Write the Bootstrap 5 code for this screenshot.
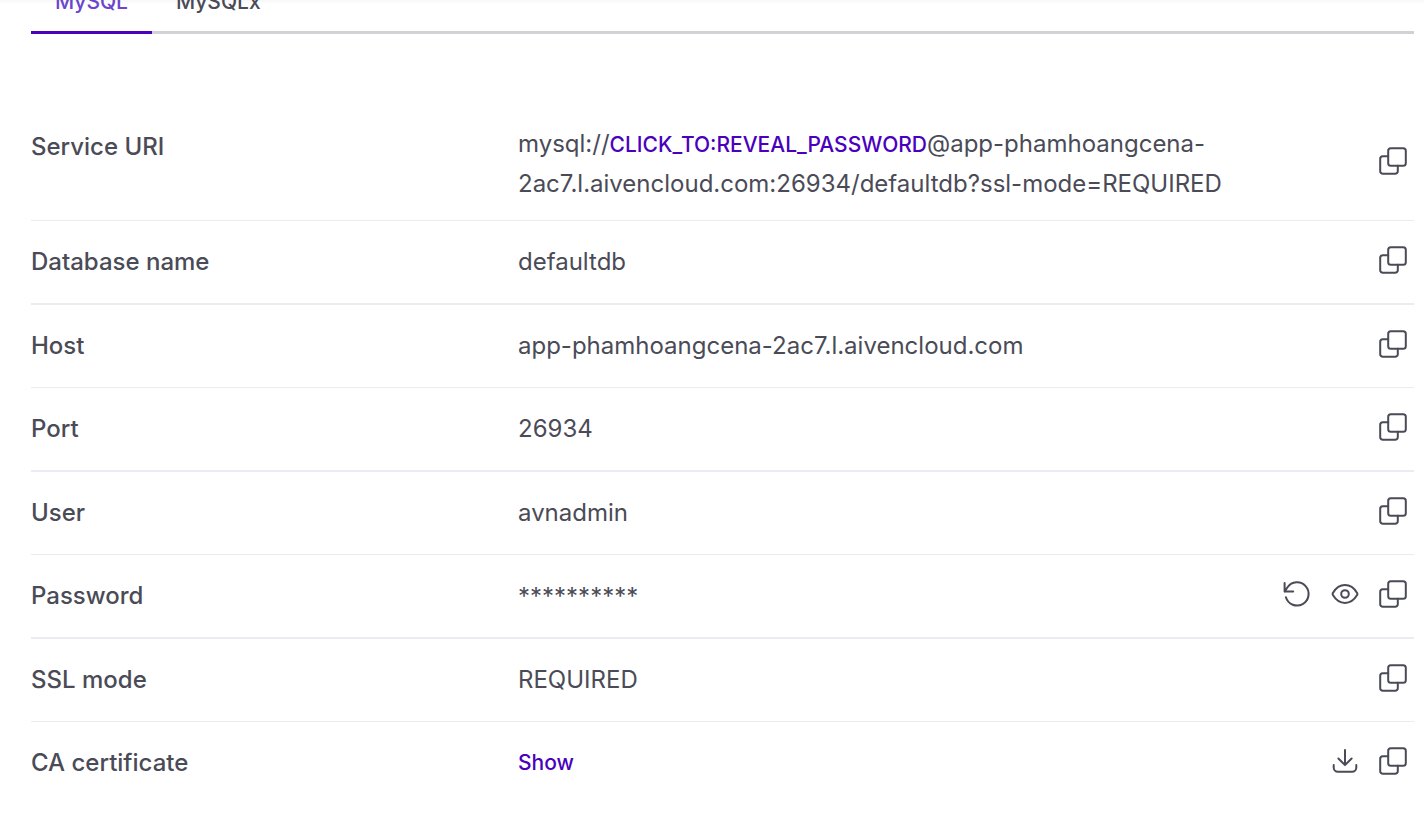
<!DOCTYPE html>
<html lang="en">
<head>
<meta charset="utf-8">
<meta name="viewport" content="width=device-width, initial-scale=1">
<title>Connection information</title>
<link href="https://cdn.jsdelivr.net/npm/bootstrap@5.3.0/dist/css/bootstrap.min.css" rel="stylesheet">
<style>
  body { font-family: Inter, "Liberation Sans", sans-serif; font-size: 24px; line-height: 36px; color: #4a4b57; background: #fff; overflow: hidden; }
  .conn { padding: 0 10px 0 31px; }
  .tabs { height: 34px; border-bottom: 3px solid #d2d2d6; font-size: 21px; margin-bottom: 68px; }
  .tabs .nav-link { height: 66px; padding: 0 24px; line-height: 74px; color: #4a4b57; font-weight: 500; }
  .tabs .nav-link.active { color: #6b46cf; border-bottom: 3px solid #4a00bd; margin-bottom: -3px; height: 69px; }
  .topfade { height: 4px; background: linear-gradient(rgba(0,0,0,.03), rgba(0,0,0,0)); }
  .info { height: 83px; border-bottom: 1px solid #ebebf1; padding-top: 23px; }
  .info.thick { height: 84px; border-bottom-width: 2px; }
  .info.uri { height: 119px; padding-top: 22px; }
  .info:last-child { border-bottom: 0; }
  .key { width: 487px; }
  .val { width: 712px; }
  .uri .key { margin-top: 5px; }
  .uri .val { line-height: 40px; }
  .uri .tools { margin-top: 21px; }
  .tools { gap: 16px; padding-right: 5px; }
  .masked { margin-top: 1px; }
  .reveal { color: #4a00bd; font-size: 21px; font-weight: 500; line-height: 1; text-decoration: none; }
  .show-cert { margin-top: -1px; }
  svg.ico { width: 32px; height: 32px; fill: none; stroke: #4a4b57; stroke-width: 2; stroke-linecap: round; stroke-linejoin: round; }
</style>
</head>
<body>
<svg class="d-none" xmlns="http://www.w3.org/2000/svg">
  <symbol id="copy" viewBox="0 0 32 32"><rect x="11.2" y="3.2" width="17.6" height="17.6" rx="2.6"/><path d="M11.2 11.2H5.8a2.6 2.6 0 0 0-2.6 2.6v12.4a2.6 2.6 0 0 0 2.6 2.6h12.4a2.6 2.6 0 0 0 2.6-2.6v-5.4"/></symbol>
  <symbol id="reset" viewBox="0 0 32 32"><path d="M4.9 19.3A11.6 11.6 0 1 0 6.5 9.3L3.6 13.6M3.6 5v8.6h8.6"/></symbol>
  <symbol id="eye" viewBox="0 0 32 32"><path d="M3.9 17.1q-.7-1.1 0-2.2C6.7 10.2 11 7 16 7s9.3 3.2 12.1 7.9q.7 1.1 0 2.2C25.3 21.8 21 25 16 25S6.7 21.8 3.9 17.1z"/><circle cx="16" cy="16" r="3.8"/></symbol>
  <symbol id="download" viewBox="0 0 32 32"><path d="M4.7 20v2.5a4.2 4.2 0 0 0 4.2 4.2h14.2a4.2 4.2 0 0 0 4.2-4.2V20M16 5v15M9.4 13.5l6.6 6.6 6.6-6.6"/></symbol>
</svg>
<div class="topfade position-absolute top-0 start-0 w-100"></div>
<main class="conn">
  <nav class="tabs nav flex-nowrap align-items-end">
    <a class="nav-link active" href="#">MySQL</a>
    <a class="nav-link" href="#">MySQLx</a>
  </nav>
  <section>
    <div class="info uri d-flex align-items-start">
      <div class="key fw-medium">Service URI</div>
      <div class="val">mysql://<a class="reveal" href="#">CLICK_TO:REVEAL_PASSWORD</a>@app-phamhoangcena-<wbr>2ac7.l.aivencloud.com:26934/defaultdb?ssl-mode=REQUIRED</div>
      <div class="tools d-flex ms-auto"><svg class="ico"><use href="#copy"/></svg></div>
    </div>
    <div class="info thick d-flex align-items-start">
      <div class="key fw-medium">Database name</div>
      <div class="val">defaultdb</div>
      <div class="tools d-flex ms-auto"><svg class="ico"><use href="#copy"/></svg></div>
    </div>
    <div class="info d-flex align-items-start">
      <div class="key fw-medium">Host</div>
      <div class="val">app-phamhoangcena-2ac7.l.aivencloud.com</div>
      <div class="tools d-flex ms-auto"><svg class="ico"><use href="#copy"/></svg></div>
    </div>
    <div class="info thick d-flex align-items-start">
      <div class="key fw-medium">Port</div>
      <div class="val">26934</div>
      <div class="tools d-flex ms-auto"><svg class="ico"><use href="#copy"/></svg></div>
    </div>
    <div class="info d-flex align-items-start">
      <div class="key fw-medium">User</div>
      <div class="val">avnadmin</div>
      <div class="tools d-flex ms-auto"><svg class="ico"><use href="#copy"/></svg></div>
    </div>
    <div class="info thick d-flex align-items-start">
      <div class="key fw-medium">Password</div>
      <div class="val masked">**********</div>
      <div class="tools d-flex ms-auto"><svg class="ico"><use href="#reset"/></svg><svg class="ico"><use href="#eye"/></svg><svg class="ico"><use href="#copy"/></svg></div>
    </div>
    <div class="info d-flex align-items-start">
      <div class="key fw-medium">SSL mode</div>
      <div class="val">REQUIRED</div>
      <div class="tools d-flex ms-auto"><svg class="ico"><use href="#copy"/></svg></div>
    </div>
    <div class="info d-flex align-items-start">
      <div class="key fw-medium">CA certificate</div>
      <div class="val show-cert"><a class="reveal" href="#">Show</a></div>
      <div class="tools d-flex ms-auto"><svg class="ico"><use href="#download"/></svg><svg class="ico"><use href="#copy"/></svg></div>
    </div>
  </section>
</main>
<script src="https://cdn.jsdelivr.net/npm/bootstrap@5.3.0/dist/js/bootstrap.bundle.min.js"></script>
</body>
</html>
